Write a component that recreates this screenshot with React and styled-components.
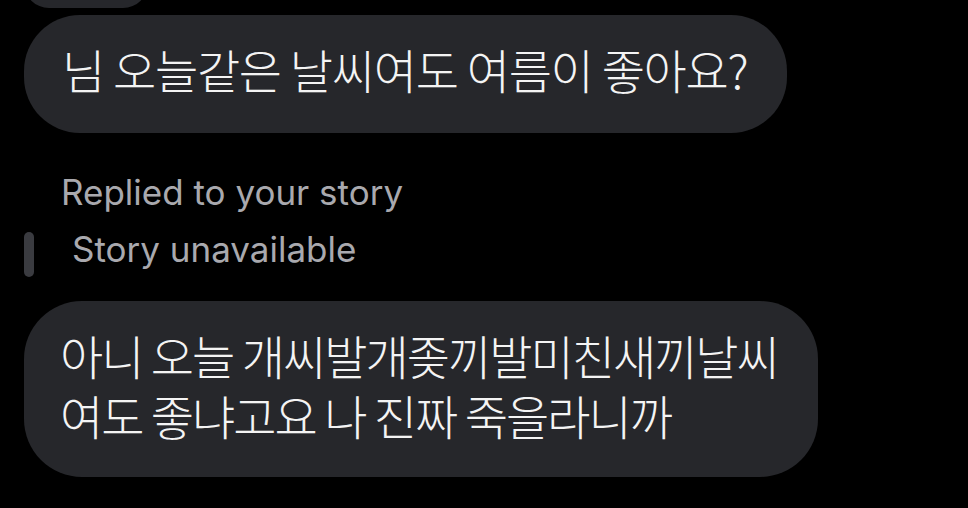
import React from "react";
import styled, { createGlobalStyle } from "styled-components";

const GlobalStyle = createGlobalStyle`
  html, body {
    margin: 0;
    padding: 0;
    background: #000;
  }
  body {
    font-family: "Noto Sans CJK KR", "Noto Sans", sans-serif;
  }
`;

const Screen = styled.div`
  width: 968px;
  height: 508px;
  overflow: hidden;
  background: #000;
  display: flex;
  flex-direction: column;
  align-items: flex-start;
  padding-left: 24px;
  box-sizing: border-box;
`;

const Bubble = styled.div`
  background: #26272b;
  color: #f4f4f4;
  border-radius: ${(p) => p.radius || 56}px;
  padding: ${(p) => p.pad || "0 40px 0 38px"};
  font-size: 47px;
  font-weight: 300;
  line-height: 60px;
  letter-spacing: ${(p) => p.spacing ?? -1.5}px;
  box-sizing: border-box;
  margin-top: ${(p) => p.mt || 0}px;
`;

const PeekBubble = styled.div`
  width: 124px;
  height: 50px;
  margin-top: -42px;
  border-radius: 25px;
  background: #26272b;
`;

const ReplyBlock = styled.div`
  display: flex;
  flex-direction: column;
  margin-top: 39px;
  font-family: "Inter", "Liberation Sans", sans-serif;
  color: #a9a9ae;
  font-size: 35px;
`;

const ReplyLabel = styled.div`
  padding-left: 37px;
  line-height: 40px;
`;

const StoryRow = styled.div`
  display: flex;
  align-items: flex-start;
  margin-top: 17px;
  gap: 38px;
`;

const QuoteBar = styled.div`
  width: 10px;
  height: 45px;
  margin-top: 3px;
  border-radius: 5px;
  background: #3a3b40;
`;

const StoryText = styled.div`
  line-height: 40px;
`;

export default function App() {
  return (
    <>
      <GlobalStyle />
      <Screen>
        <PeekBubble />
        <Bubble mt={7} pad="24px 40px 34px 38px" spacing={-1.3}>
          님 오늘같은 날씨여도 여름이 좋아요?
        </Bubble>
        <ReplyBlock>
          <ReplyLabel>Replied to your story</ReplyLabel>
          <StoryRow>
            <QuoteBar />
            <StoryText>Story unavailable</StoryText>
          </StoryRow>
        </ReplyBlock>
        <Bubble mt={24} pad="24px 40px 32px 36px" radius={58} spacing={-2}>
          아니 오늘 개씨발개좆끼발미친새끼날씨
          <br />
          여도 좋냐고요 나 진짜 죽을라니까
        </Bubble>
      </Screen>
    </>
  );
}
